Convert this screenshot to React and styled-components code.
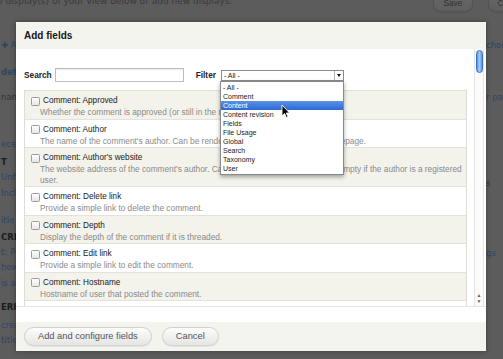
import React from "react";
import styled, { createGlobalStyle } from "styled-components";

const GlobalStyle = createGlobalStyle`
  html, body {
    margin: 0;
    padding: 0;
  }
  body {
    background: #5c5c5c;
    font-family: "Liberation Sans", "DejaVu Sans", sans-serif;
    overflow: hidden;
  }
`;

const leftBits = [
  { text: "✚ Add", gap: 17, kind: "link" },
  { text: "details", gap: 15, kind: "strong-link" },
  { text: "name", gap: 13, kind: "plain" },
  { text: "ecent comments", gap: 35, kind: "link" },
  { text: "T", gap: 6, kind: "heading" },
  { text: "Unformatted list", gap: 3, kind: "link" },
  { text: "Include", gap: 4, kind: "link" },
  { text: "itle", gap: 15, kind: "link" },
  { text: "CRITERIA", gap: 5, kind: "heading" },
  { text: "t: Published", gap: 3, kind: "link" },
  { text: "how", gap: 3, kind: "link" },
  { text: "is a", gap: 4, kind: "link" },
  { text: "ERIT", gap: 12, kind: "heading" },
  { text: "created", gap: 6, kind: "link" },
  { text: "title", gap: 3, kind: "link" },
];

const rightBits = [
  { text: "chose", gap: 17, kind: "link" },
  { text: "r page", gap: 40, kind: "link" },
  { text: "s", gap: 74, kind: "plain" },
  { text: "gs", gap: 58, kind: "link" },
];

const filterOptions = [
  "- All -",
  "Comment",
  "Content",
  "Content revision",
  "Fields",
  "File Usage",
  "Global",
  "Search",
  "Taxonomy",
  "User",
];

const fields = [
  {
    title: "Comment: Approved",
    help: "Whether the comment is approved (or still in the moderation queue).",
  },
  {
    title: "Comment: Author",
    help: "The name of the comment's author. Can be rendered as a link to the author's homepage.",
  },
  {
    title: "Comment: Author's website",
    help: "The website address of the comment's author. Can be rendered as a link. Will be empty if the author is a registered user.",
  },
  { title: "Comment: Delete link", help: "Provide a simple link to delete the comment." },
  { title: "Comment: Depth", help: "Display the depth of the comment if it is threaded." },
  { title: "Comment: Edit link", help: "Provide a simple link to edit the comment." },
  { title: "Comment: Hostname", help: "Hostname of user that posted the comment." },
  { title: "Comment: Last comment author", help: "The name of the author of the last comment." },
];

const App = () => {
  return (
    <>
      <GlobalStyle />
      <Page>
        <TopBar>
          <TopText>e display(s) of your view below or add new displays.</TopText>
          <GhostButton $mr={17}>Save</GhostButton>
          <GhostButton $mr={-30}>Cancel</GhostButton>
        </TopBar>
        <Side>
          {leftBits.map((b, i) => (
            <Bit key={i} $gap={b.gap} $kind={b.kind}>
              {b.text}
            </Bit>
          ))}
        </Side>
        <Middle />
        <Side>
          {rightBits.map((b, i) => (
            <Bit key={i} $gap={b.gap} $kind={b.kind}>
              {b.text}
            </Bit>
          ))}
        </Side>

        <Modal>
          <TitleBar>Add fields</TitleBar>
          <ScrollArea>
            <Content>
              <SearchRow>
                <Label>Search</Label>
                <SearchInput />
                <Label $left={12}>Filter</Label>
                <Select>
                  <SelectValue>- All -</SelectValue>
                  <SelectArrow />
                  <Dropdown>
                    {filterOptions.map((o) => (
                      <Option key={o} $active={o === "Content"}>
                        {o}
                      </Option>
                    ))}
                    <Cursor width="10" height="15" viewBox="0 0 10 15">
                      <path
                        d="M1 1 L1 12 L3.6 9.6 L5.4 13.6 L7 12.9 L5.3 9 L8.6 9 Z"
                        fill="#000"
                        stroke="#fff"
                        strokeWidth="0.9"
                        strokeLinejoin="round"
                      />
                    </Cursor>
                  </Dropdown>
                </Select>
              </SearchRow>
              <List>
                {fields.map((f, i) => (
                  <Row key={f.title} $odd={i % 2 === 0}>
                    <RowTitle>
                      <Checkbox />
                      {f.title}
                    </RowTitle>
                    <RowHelp>{f.help}</RowHelp>
                  </Row>
                ))}
              </List>
            </Content>
            <Scrollbar>
              <Thumb />
              <Track />
              <Arrows>
                <span>▲</span>
                <span>▼</span>
              </Arrows>
            </Scrollbar>
          </ScrollArea>
          <Gap />
          <Footer>
            <Button>Add and configure fields</Button>
            <Button>Cancel</Button>
          </Footer>
        </Modal>
      </Page>
    </>
  );
};

const Page = styled.div`
  position: relative;
  width: 503px;
  height: 359px;
  overflow: hidden;
  display: grid;
  grid-template-columns: 16px 1fr 18px;
  grid-template-rows: 22px 1fr;
  background: #5c5c5c;
`;

const TopBar = styled.div`
  grid-column: 1 / -1;
  display: flex;
  align-items: flex-start;
  height: 22px;
`;

const TopText = styled.p`
  flex: 1;
  margin: -5px 0 0 -3px;
  font-family: "DejaVu Sans", sans-serif;
  font-size: 9px;
  line-height: 12px;
  color: #3a3a3a;
  white-space: nowrap;
`;

const GhostButton = styled.span`
  margin: -5px ${(p) => p.$mr}px 0 0;
  height: 16px;
  padding: 0 9px;
  border-radius: 7px;
  background: linear-gradient(#666, #5e5e5e);
  box-shadow: 0 0 0 1px #545454, 0 1px 2px rgba(0, 0, 0, 0.2);
  font-size: 8.5px;
  line-height: 17px;
  color: #333;
`;

const Side = styled.div`
  display: flex;
  flex-direction: column;
  overflow: hidden;
  white-space: nowrap;
`;

const Middle = styled.div``;

const Bit = styled.span`
  margin-top: ${(p) => p.$gap}px;
  padding-left: 1px;
  font-family: "DejaVu Sans", sans-serif;
  font-size: 8.5px;
  line-height: 12px;
  font-weight: ${(p) => (p.$kind === "heading" || p.$kind === "strong-link" ? "bold" : "normal")};
  color: ${(p) =>
    p.$kind === "heading" ? "#1c1c1c" : p.$kind === "plain" ? "#343434" : "#2c4666"};
`;

const Modal = styled.div`
  position: absolute;
  left: 16px;
  top: 22px;
  width: 470px;
  height: 329px;
  display: flex;
  flex-direction: column;
  background: #fff;
  box-shadow: 0 0 5px rgba(0, 0, 0, 0.35);
`;

const TitleBar = styled.div`
  height: 27px;
  flex: none;
  display: flex;
  align-items: center;
  padding: 0 8px;
  background: #f4f4ee;
  font-size: 10px;
  font-weight: bold;
  color: #161616;
`;

const ScrollArea = styled.div`
  height: 257px;
  flex: none;
  display: flex;
  padding-right: 2px;
`;

const Content = styled.div`
  flex: 1;
  min-width: 0;
  display: flex;
  flex-direction: column;
  padding: 0 7px 0 8px;
`;

const SearchRow = styled.div`
  display: flex;
  align-items: center;
  height: 14px;
  margin-top: 19px;
  flex: none;
`;

const Label = styled.span`
  margin-left: ${(p) => p.$left || 0}px;
  margin-right: ${(p) => (p.$left ? 5 : 3)}px;
  font-size: 8.3px;
  font-weight: bold;
  color: #222;
`;

const SearchInput = styled.div`
  width: 129px;
  height: 14px;
  box-sizing: border-box;
  border: 1px solid #bdbdbd;
  box-shadow: inset 0 1px 1px rgba(0, 0, 0, 0.08);
  background: #fff;
`;

const Select = styled.div`
  position: relative;
  width: 123px;
  height: 11px;
  box-sizing: border-box;
  display: flex;
  border: 1px solid #8c8c8c;
  background: #fff;
`;

const SelectValue = styled.span`
  flex: 1;
  padding-left: 2px;
  font-size: 7px;
  line-height: 9px;
  color: #222;
`;

const SelectArrow = styled.span`
  width: 8px;
  border-left: 1px solid #b4b4b4;
  position: relative;
  &::after {
    content: "";
    position: absolute;
    left: 2px;
    top: 3px;
    border-left: 2px solid transparent;
    border-right: 2px solid transparent;
    border-top: 3px solid #111;
  }
`;

const Dropdown = styled.div`
  position: absolute;
  top: 10px;
  left: -2px;
  width: 124px;
  padding: 1px 0;
  box-sizing: border-box;
  border: 1px solid #8a8a8a;
  background: #fff;
  box-shadow: 0 2px 4px rgba(0, 0, 0, 0.35);
  z-index: 2;
`;

const Option = styled.div`
  height: 9px;
  padding-left: 2px;
  font-size: 7px;
  line-height: 9px;
  color: ${(p) => (p.$active ? "#fff" : "#1a1a1a")};
  background: ${(p) => (p.$active ? "linear-gradient(#5a93e6, #2e68d3)" : "transparent")};
`;

const Cursor = styled.svg`
  position: absolute;
  left: 60px;
  top: 22px;
`;

const List = styled.div`
  margin-top: 8px;
  flex: 1;
  overflow: hidden;
  border: 1px solid #deded6;
  border-bottom: none;
`;

const Row = styled.div`
  padding: 4px 4px 1px 6px;
  border-bottom: 1px solid #e3e3db;
  background: ${(p) => (p.$odd ? "#f3f3ec" : "#fff")};
`;

const RowTitle = styled.div`
  display: flex;
  align-items: center;
  gap: 3px;
  font-size: 8.2px;
  line-height: 12px;
  color: #222;
`;

const Checkbox = styled.span`
  width: 7px;
  height: 7px;
  flex: none;
  border: 1px solid #9c9c9c;
  border-radius: 1.5px;
  background: linear-gradient(#fff, #e6e6e6);
`;

const RowHelp = styled.div`
  padding-left: 9px;
  font-size: 8.3px;
  line-height: 10.5px;
  color: #8a8a8a;
`;

const Scrollbar = styled.div`
  width: 10px;
  display: flex;
  flex-direction: column;
  align-items: center;
  box-sizing: border-box;
  border-left: 1px solid #e4e4e4;
  border-right: 1px solid #e4e4e4;
  background: #fbfbfb;
`;

const Thumb = styled.div`
  width: 7px;
  height: 23px;
  margin-top: 1px;
  border-radius: 4px;
  box-sizing: border-box;
  border: 1px solid #3b6fc4;
  background: linear-gradient(90deg, #4f8be0, #a9cdf7 45%, #5c97e6);
`;

const Track = styled.div`
  flex: 1;
`;

const Arrows = styled.div`
  display: flex;
  flex-direction: column;
  font-size: 5px;
  line-height: 6px;
  color: #666;
  margin-bottom: 2px;
`;

const Gap = styled.div`
  height: 15px;
  flex: none;
  border-top: 1px solid #e6e6e0;
`;

const Footer = styled.div`
  flex: 1;
  display: flex;
  align-items: center;
  gap: 10px;
  padding: 0 8px;
  background: #f4f4ee;
`;

const Button = styled.span`
  height: 19px;
  padding: 0 13px;
  box-sizing: border-box;
  border-radius: 10px;
  border: 1px solid #d2d2cc;
  background: linear-gradient(#fdfdfd, #e5e5e2);
  box-shadow: 0 1px 1px rgba(0, 0, 0, 0.06);
  font-size: 9.3px;
  line-height: 17px;
  color: #555;
  white-space: nowrap;
`;

export default App;
